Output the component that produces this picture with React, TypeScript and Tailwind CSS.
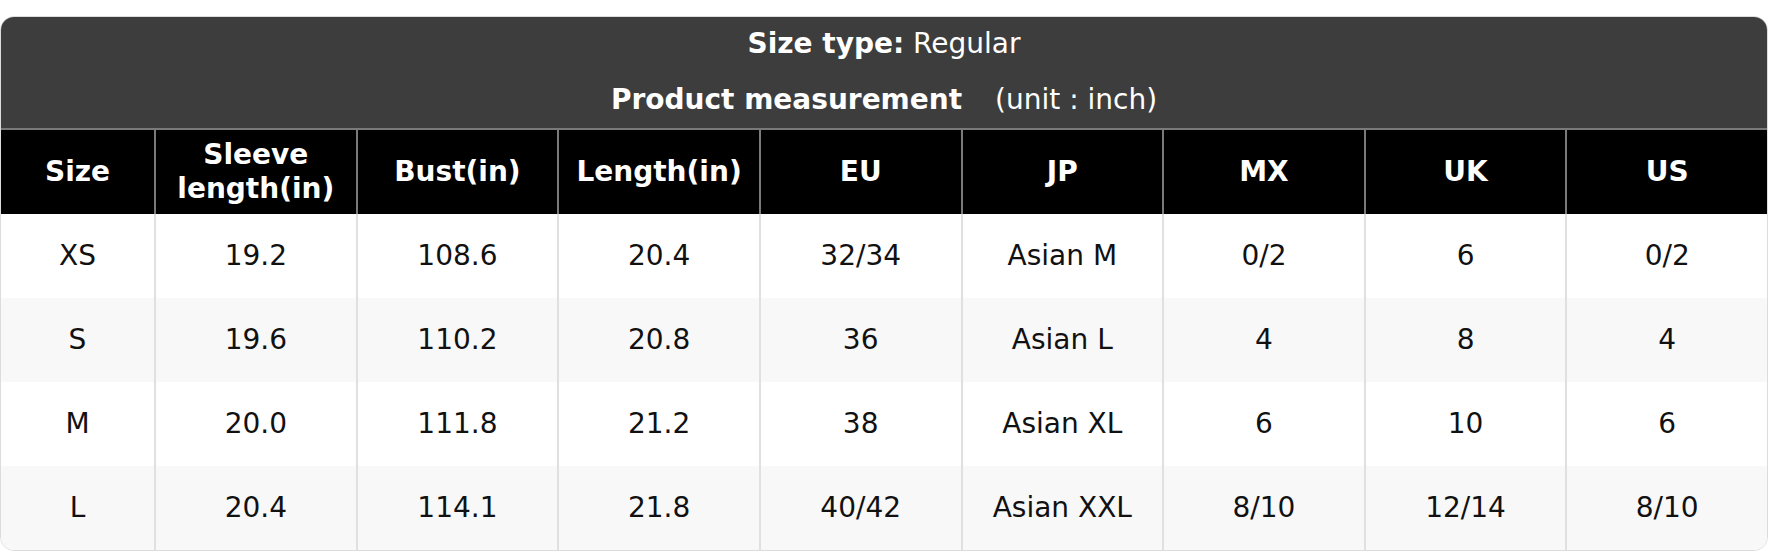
const headers = [
  'Size',
  'Sleeve length(in)',
  'Bust(in)',
  'Length(in)',
  'EU',
  'JP',
  'MX',
  'UK',
  'US',
];

const rows = [
  ['XS', '19.2', '108.6', '20.4', '32/34', 'Asian M', '0/2', '6', '0/2'],
  ['S', '19.6', '110.2', '20.8', '36', 'Asian L', '4', '8', '4'],
  ['M', '20.0', '111.8', '21.2', '38', 'Asian XL', '6', '10', '6'],
  ['L', '20.4', '114.1', '21.8', '40/42', 'Asian XXL', '8/10', '12/14', '8/10'],
];

const App = () => {
  return (
    <div className="bg-white pt-[16px] font-['DejaVu_Sans',sans-serif]">
      <div className="w-[1768px] rounded-[14px] overflow-hidden border border-[#dcdcdc]">
        {/* 标题区域 */}
        <div className="bg-[#3d3d3d] text-white text-[28px] flex flex-col items-center gap-[26px] pt-[12px] pb-[13px] border-b-2 border-[#7a7a7a]">
          <div className="leading-[30px]">
            <span className="font-bold">Size type:</span> Regular
          </div>
          <div className="leading-[30px]">
            <span className="font-bold">Product measurement</span>
            <span className="ml-[33px]">(unit : inch)</span>
          </div>
        </div>

        {/* 表头 */}
        <div className="grid grid-cols-[153px_repeat(8,minmax(0,1fr))] bg-black text-white font-bold text-[28px] leading-[34px] h-[84px]">
          {headers.map((h, i) => (
            <div
              key={h}
              className={`flex items-center justify-center text-center px-[8px] ${i > 0 ? 'border-l-2 border-[#7a7a7a]' : ''}`}
            >
              {h === 'Sleeve length(in)' ? (
                <span>
                  Sleeve
                  <br />
                  length(in)
                </span>
              ) : (
                h
              )}
            </div>
          ))}
        </div>

        {/* 数据行 */}
        {rows.map((r, ri) => (
          <div
            key={r[0]}
            className={`grid grid-cols-[153px_repeat(8,minmax(0,1fr))] h-[84px] text-[28px] text-[#111] ${ri % 2 === 1 ? 'bg-[#f8f8f8]' : 'bg-white'}`}
          >
            {r.map((c, ci) => (
              <div
                key={ci}
                className={`flex items-center justify-center ${ci > 0 ? 'border-l-2 border-[#e0e0e0]' : ''}`}
              >
                {c}
              </div>
            ))}
          </div>
        ))}
      </div>
    </div>
  );
};

export default App;
